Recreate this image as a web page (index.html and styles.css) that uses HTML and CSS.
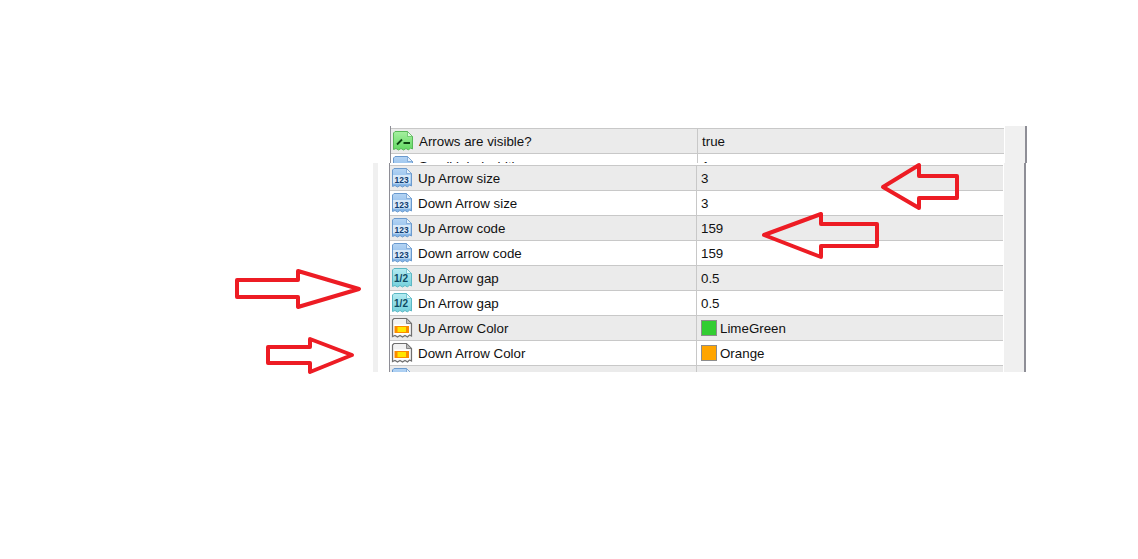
FILE: index.html
```html
<!DOCTYPE html>
<html lang="en">
<head>
<meta charset="utf-8">
<title>Indicator inputs</title>
<link rel="stylesheet" href="styles.css">
</head>
<body>
<svg class="defs" width="0" height="0" aria-hidden="true">
  <defs>
    <path id="doc" d="M3 1.500H15.500L20.500 6.500V19L18.500 18L16.500 20L14 18.500L11.500 20L9 18.500L6.500 20L4 18.500L1.500 19.500V3Z"/>
    <linearGradient id="g-green" x1="0" y1="0" x2="0" y2="1"><stop offset="0" stop-color="#a6f0a0"/><stop offset="1" stop-color="#62d862"/></linearGradient>
    <linearGradient id="g-blue" x1="0" y1="0" x2="0" y2="1"><stop offset="0" stop-color="#b4d4f4"/><stop offset="1" stop-color="#7fb2e6"/></linearGradient>
    <linearGradient id="g-teal" x1="0" y1="0" x2="0" y2="1"><stop offset="0" stop-color="#b4ecf2"/><stop offset="1" stop-color="#74d0dc"/></linearGradient>
    <symbol id="i-bool" viewBox="0 0 22 22">
      <use href="#doc" fill="url(#g-green)" stroke="#58b858"/>
      <path d="M15.500 1.500V6.500H20.500Z" fill="#e4fbe4" stroke="#58b858" stroke-width=".7"/>
      <path d="M5 14.500L10 9.500M11.500 13H18" fill="none" stroke="#0b4410" stroke-width="1.800"/>
    </symbol>
    <symbol id="i-int" viewBox="0 0 22 22">
      <use href="#doc" fill="url(#g-blue)" stroke="#6a9ace"/>
      <path d="M15.500 1.500V6.500H20.500Z" fill="#e6f1fb" stroke="#6a9ace" stroke-width=".7"/>
      <rect x="2" y="8" width="17.500" height="8.500" fill="#d8e9f9"/>
      <text x="10.700" y="15.500" class="glyph glyph-int">123</text>
    </symbol>
    <symbol id="i-dbl" viewBox="0 0 22 22">
      <use href="#doc" fill="url(#g-teal)" stroke="#5cb8c4"/>
      <path d="M15.500 1.500V6.500H20.500Z" fill="#e4f9fb" stroke="#5cb8c4" stroke-width=".7"/>
      <text x="10" y="15" class="glyph glyph-dbl">1/2</text>
    </symbol>
    <symbol id="i-col" viewBox="0 0 22 22">
      <use href="#doc" fill="#f2f2f2" stroke="#707070" stroke-width="1.200"/>
      <path d="M15.500 1.500V6.500H20.500Z" fill="#bbb" stroke="#707070" stroke-width=".8"/>
      <rect x="3" y="7.500" width="15.500" height="10" fill="#fff"/>
      <rect x="3.500" y="9" width="14.500" height="7" fill="#fb8c00"/>
      <rect x="6.500" y="10" width="8.500" height="5" fill="#ffe600"/>
    </symbol>
  </defs>
</svg>

<main class="page">
  <section class="panel panel-upper">
    <div class="grid">
      <div class="row shade">
        <div class="name"><svg class="icon"><use href="#i-bool"/></svg>Arrows are visible?</div>
        <div class="val">true</div>
      </div>
      <div class="row">
        <div class="name"><svg class="icon"><use href="#i-int"/></svg>Small label width</div>
        <div class="val">1</div>
      </div>
    </div>
    <div class="scroll"></div>
  </section>

  <section class="panel panel-lower">
    <div class="strip"></div>
    <div class="grid">
      <div class="row shade">
        <div class="name"><svg class="icon"><use href="#i-int"/></svg>Up Arrow size</div>
        <div class="val">3</div>
      </div>
      <div class="row">
        <div class="name"><svg class="icon"><use href="#i-int"/></svg>Down Arrow size</div>
        <div class="val">3</div>
      </div>
      <div class="row shade">
        <div class="name"><svg class="icon"><use href="#i-int"/></svg>Up Arrow code</div>
        <div class="val">159</div>
      </div>
      <div class="row">
        <div class="name"><svg class="icon"><use href="#i-int"/></svg>Down arrow code</div>
        <div class="val">159</div>
      </div>
      <div class="row shade">
        <div class="name"><svg class="icon"><use href="#i-dbl"/></svg>Up Arrow gap</div>
        <div class="val">0.5</div>
      </div>
      <div class="row">
        <div class="name"><svg class="icon"><use href="#i-dbl"/></svg>Dn Arrow gap</div>
        <div class="val">0.5</div>
      </div>
      <div class="row shade">
        <div class="name"><svg class="icon"><use href="#i-col"/></svg>Up Arrow Color</div>
        <div class="val"><span class="swatch swatch-lime"></span>LimeGreen</div>
      </div>
      <div class="row">
        <div class="name"><svg class="icon"><use href="#i-col"/></svg>Down Arrow Color</div>
        <div class="val"><span class="swatch swatch-orange"></span>Orange</div>
      </div>
      <div class="row shade">
        <div class="name"><svg class="icon"><use href="#i-int"/></svg></div>
        <div class="val"></div>
      </div>
    </div>
    <div class="scroll"></div>
  </section>

  <svg class="arrows" viewBox="0 0 1138 559" aria-hidden="true">
    <polygon points="883,187 919,165 919,176 957,176 957,198 919,198 919,208"/>
    <polygon points="764,235 821,214 821,224 877,224 877,246 821,246 821,257"/>
    <polygon points="237,280 298,280 298,271 359,289 298,307 298,297 237,297"/>
    <polygon points="268,347 310,347 310,339 352,355 310,372 310,363 268,363"/>
  </svg>
</main>
</body>
</html>
```
FILE: styles.css
```css
html, body {
  margin: 0;
  padding: 0;
  background: #fff;
}

.defs {
  position: absolute;
}

.glyph {
  font-family: "Liberation Sans", Arial, sans-serif;
  font-weight: 700;
  text-anchor: middle;
}

.glyph-int {
  font-size: 8.500px;
  fill: #103c70;
}

.glyph-dbl {
  font-size: 10px;
  fill: #0e4a62;
}

.page {
  position: relative;
  width: 1138px;
  height: 559px;
  overflow: hidden;
  padding-top: 126px;
  box-sizing: border-box;
  font-family: "Liberation Sans", Arial, sans-serif;
  font-size: 13.330px;
  color: #111;
}

.panel {
  display: flex;
  overflow: hidden;
}

.panel-upper {
  height: 37px;
  margin-left: 390px;
  width: 637px;
}

.panel-lower {
  height: 209px;
  margin-left: 373px;
  width: 653px;
}

.grid {
  flex: none;
  width: 614px;
  box-sizing: border-box;
  border-left: 1px solid #8e8e96;
  padding-top: 2px;
}

.strip {
  flex: none;
  width: 5px;
  margin-right: 11px;
  background: #f0f0f0;
}

.scroll {
  flex: none;
  width: 22px;
  box-sizing: border-box;
  margin-left: 1px;
  background: #f0f0f0;
  border-right: 2px solid #8e8e96;
}

.row {
  display: flex;
  height: 25px;
  box-sizing: border-box;
  border-top: 1px solid #c8c8c8;
  background: #fff;
}

.row.shade {
  background: #ebebeb;
}

.name {
  display: flex;
  align-items: center;
  width: 306px;
  flex: none;
  border-right: 1px solid #c8c8c8;
}

.val {
  display: flex;
  align-items: center;
  flex: 1;
  padding-left: 4px;
}

.icon {
  width: 22px;
  height: 22px;
  flex: none;
  margin: 0 5px 0 1px;
}

.swatch {
  width: 14px;
  height: 14px;
  border: 1px solid #8c8c8c;
  margin-right: 3px;
  flex: none;
}

.swatch-lime {
  background: #32cd32;
}

.swatch-orange {
  background: #ffa500;
}

.arrows {
  position: absolute;
  left: 0;
  top: 0;
  width: 1138px;
  height: 559px;
  fill: none;
  stroke: #ed1c24;
  stroke-width: 4;
  stroke-linejoin: round;
}
```
